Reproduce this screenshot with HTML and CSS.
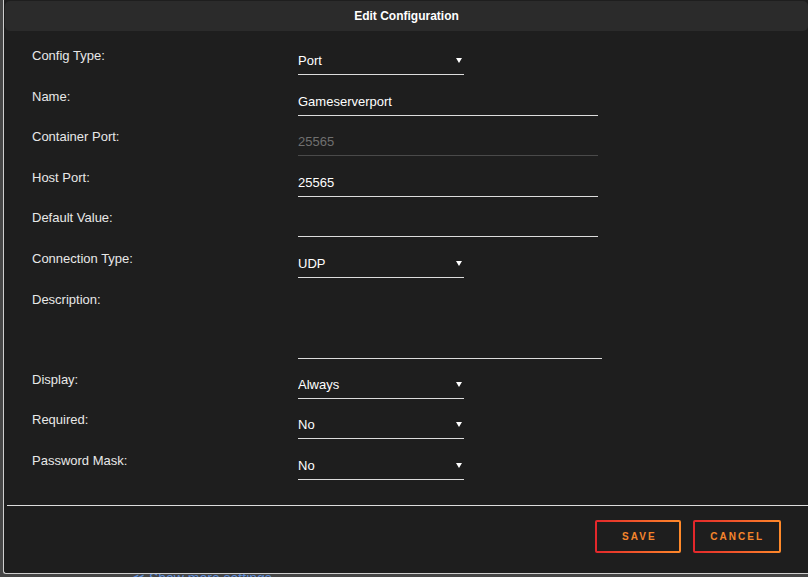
FILE: index.html
```html
<!DOCTYPE html>
<html>
  <head>
    <meta name="viewport" content="width=device-width, initial-scale=1" />
    <title>Edit Configuration</title>
    <link rel="stylesheet" href="styles.css">
  </head>

  <body>
    <section class="dialog">
      <header class="dialog-title">Edit Configuration</header>

      <form class="config-form">
        <div class="row">
          <label>Config Type:</label>
          <span class="select-wrap">
            <select><option>Port</option></select>
          </span>
        </div>
        <div class="row">
          <label>Name:</label>
          <input type="text" value="Gameserverport" />
        </div>
        <div class="row">
          <label>Container Port:</label>
          <input type="text" value="25565" disabled />
        </div>
        <div class="row">
          <label>Host Port:</label>
          <input type="text" value="25565" />
        </div>
        <div class="row">
          <label>Default Value:</label>
          <input type="text" value="" />
        </div>
        <div class="row">
          <label>Connection Type:</label>
          <span class="select-wrap">
            <select><option>UDP</option></select>
          </span>
        </div>
        <div class="row row-tall">
          <label>Description:</label>
          <textarea></textarea>
        </div>
        <div class="row">
          <label>Display:</label>
          <span class="select-wrap">
            <select><option>Always</option></select>
          </span>
        </div>
        <div class="row">
          <label>Required:</label>
          <span class="select-wrap">
            <select><option>No</option></select>
          </span>
        </div>
        <div class="row">
          <label>Password Mask:</label>
          <span class="select-wrap">
            <select><option>No</option></select>
          </span>
        </div>
      </form>

      <footer class="dialog-actions">
        <button type="button" class="btn btn-save">SAVE</button>
        <button type="button" class="btn">CANCEL</button>
      </footer>
    </section>

    <a class="more-link" href="#">&#8810; Show more settings</a>
  </body>
</html>
```

FILE: styles.css
```css
/* ------------------------------ reset ------------------------------ */
* {
  margin: 0;
  padding: 0;
  box-sizing: border-box;
  font-family: "Liberation Sans", Arial, sans-serif;
}

body {
  background: #464646;
  overflow: hidden;
  height: 100vh;
}

/* ------------------------------ dialog ------------------------------ */
.dialog {
  position: relative;
  z-index: 1;
  margin-left: 3px;
  width: 806px;
  background: #1e1e1e;
  border-left: 1px solid #cfcfcf;
  border-bottom: 1px solid #cfcfcf;
  border-bottom-left-radius: 3px;
  padding-top: 1px;
}

.dialog-title {
  margin: 0 1px 0 1px;
  height: 30px;
  line-height: 30px;
  background: #2b2b2b;
  border-radius: 5px;
  color: #fff;
  font-size: 12px;
  font-weight: bold;
  text-align: center;
}

/* ------------------------------ form ------------------------------ */
.config-form {
  padding: 16px 0 13px 28px;
}

.row {
  display: grid;
  grid-template-columns: 266px auto;
  align-items: start;
  height: 40.6px;
}
.row-tall {
  height: 80px;
}

.row label {
  color: #e8e8e8;
  font-size: 13px;
  line-height: 18px;
}

.row input,
.row select,
.row textarea {
  display: block;
  margin-top: 5px;
  padding: 0 0 4px 0;
  border: 0;
  border-bottom: 1px solid #dcdcdc;
  outline: 0;
  background: transparent;
  color: #fff;
  font-size: 13px;
  line-height: 18px;
  box-sizing: content-box;
  height: 18px;
}

.row input {
  width: 300px;
}
.row input:disabled {
  color: #707070;
  border-bottom-color: #4a4a4a;
}

.row textarea {
  width: 304px;
  height: 59px;
  resize: none;
  padding-bottom: 3px;
}

.select-wrap {
  position: relative;
  display: block;
  width: 166px;
}
.select-wrap select {
  appearance: none;
  -webkit-appearance: none;
  width: 166px;
}
.select-wrap::after {
  content: "";
  position: absolute;
  right: 2px;
  top: 11px;
  border-left: 3px solid transparent;
  border-right: 3px solid transparent;
  border-top: 5px solid #fff;
}

/* ------------------------------ actions ------------------------------ */
.dialog-actions {
  display: flex;
  justify-content: flex-end;
  gap: 12px;
  margin: 0 1px 0 3px;
  padding: 14px 27px 20px 0;
  border-top: 1px solid #dcdcdc;
}

.btn {
  min-width: 86px;
  height: 33px;
  padding: 0 15px;
  border: 2px solid transparent;
  border-radius: 2px;
  background: linear-gradient(#1e1e1e, #1e1e1e) padding-box,
    linear-gradient(90deg, #e3262b, #ff8a2a) border-box;
  color: #f5852c;
  font-size: 10px;
  font-weight: bold;
  letter-spacing: 2px;
  cursor: pointer;
}
.btn-save {
  padding-left: 17px;
}

/* ------------------------------ behind dialog ------------------------------ */
.more-link {
  display: block;
  margin: -5px 0 0 130px;
  color: #5b8bd8;
  font-size: 14px;
  line-height: 18px;
  text-decoration: none;
}
```
